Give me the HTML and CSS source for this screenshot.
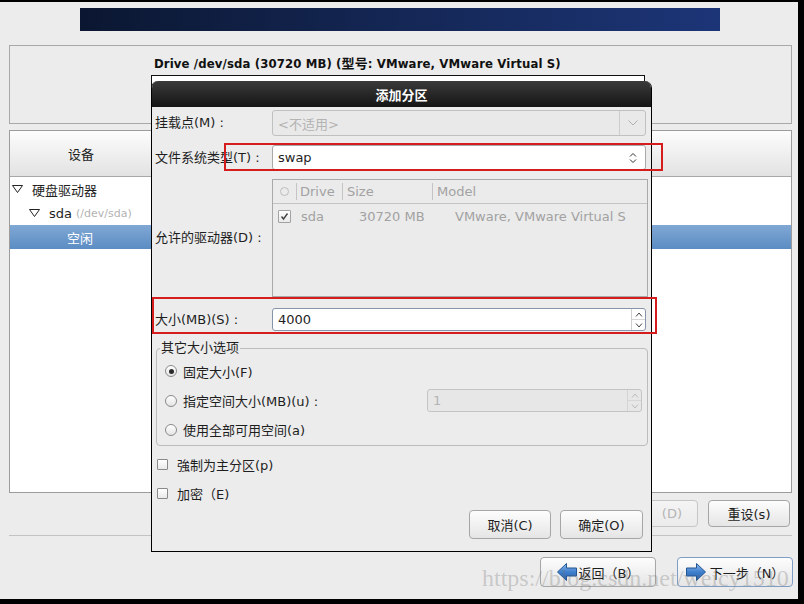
FILE: index.html
```html
<!DOCTYPE html>
<html lang="zh-CN">
<head>
<meta charset="utf-8">
<title>添加分区</title>
<link rel="stylesheet" href="styles.css">
</head>
<body>
<div class="screen">
  <div class="banner"></div>

  <section class="drive-panel">
    <div class="drive-title">Drive /dev/sda (30720 MB) (型号: VMware, VMware Virtual S)</div>
    <div class="part-bar"></div>
  </section>

  <section class="dev-panel">
    <div class="dev-head">
      <div class="head-dev">设备</div>
    </div>
    <div class="tree">
      <div class="tree-row lvl0">
        <svg class="tri" viewBox="0 0 11 8"><polygon points="0.5,0.5 10.5,0.5 5.5,7.5" fill="none" stroke="#222" stroke-width="1"/></svg>
        <span>硬盘驱动器</span>
      </div>
      <div class="tree-row lvl1">
        <svg class="tri" viewBox="0 0 11 8"><polygon points="0.5,0.5 10.5,0.5 5.5,7.5" fill="none" stroke="#222" stroke-width="1"/></svg>
        <span class="sda">sda</span><span class="dim">(/dev/sda)</span>
      </div>
      <div class="tree-row sel"><span>空闲</span></div>
    </div>
  </section>

  <div class="act-row">
    <button class="btn act">创建(C)</button>
    <button class="btn act">编辑(E)</button>
    <button class="btn act disabled"><span class="del-word">删除</span><span>(D)</span></button>
    <button class="btn act">重设(s)</button>
  </div>

  <div class="sep"></div>

  <div class="nav-row">
    <button class="btn nav">
      <svg class="arrow" viewBox="0 0 20 18"><defs><linearGradient id="ga" x1="0" y1="0" x2="0" y2="1"><stop offset="0" stop-color="#8dbbf0"/><stop offset="0.5" stop-color="#3f7fcc"/><stop offset="1" stop-color="#2a62ad"/></linearGradient></defs><polygon points="0.5,9 9.5,0.5 9.5,5 19.5,5 19.5,13 9.5,13 9.5,17.5" fill="url(#ga)" stroke="#245592" stroke-width="1"/></svg>
      <span>返回（B）</span>
    </button>
    <button class="btn nav next">
      <svg class="arrow" viewBox="0 0 20 18"><defs><linearGradient id="gb" x1="0" y1="0" x2="0" y2="1"><stop offset="0" stop-color="#8dbbf0"/><stop offset="0.5" stop-color="#3f7fcc"/><stop offset="1" stop-color="#2a62ad"/></linearGradient></defs><polygon points="19.5,9 10.5,0.5 10.5,5 0.5,5 0.5,13 10.5,13 10.5,17.5" fill="url(#gb)" stroke="#245592" stroke-width="1"/></svg>
      <span>下一步（N）</span>
    </button>
  </div>

  <div class="dialog">
    <div class="dlg-title">添加分区</div>
    <div class="dlg-body">
      <div class="form">
        <div class="lbl">挂载点(M) :</div>
        <div class="combo disabled">
          <span class="combo-text">&lt;不适用&gt;</span>
          <span class="combo-btn"><svg class="chev" viewBox="0 0 10 6"><polyline points="0.5,0.5 5,5 9.5,0.5" fill="none" stroke="#b0b0b0" stroke-width="1"/></svg></span>
        </div>

        <div class="lbl">文件系统类型(T) :</div>
        <div class="combo fs">
          <span class="combo-text">swap</span>
          <svg class="updown" viewBox="0 0 8 12"><polyline points="1,4.5 4,1.5 7,4.5" fill="none" stroke="#333" stroke-width="1"/><polyline points="1,7.5 4,10.5 7,7.5" fill="none" stroke="#333" stroke-width="1"/></svg>
        </div>

        <div class="lbl">允许的驱动器(D) :</div>
        <div class="drives">
          <div class="drv-head">
            <span class="h0"><span class="hcircle"></span></span>
            <span class="h1">Drive</span>
            <span class="h2">Size</span>
            <span class="h3">Model</span>
          </div>
          <div class="drv-row">
            <span class="r0"><span class="check small on"><svg viewBox="0 0 9 9"><polyline points="1.5,4.5 3.5,7 7.5,1.5" fill="none" stroke="#444" stroke-width="1.4"/></svg></span></span>
            <span class="r1">sda</span>
            <span class="r2">30720 MB</span>
            <span class="r3">VMware, VMware Virtual S</span>
          </div>
        </div>

        <div class="lbl size-lbl">大小(MB)(S) :</div>
        <div class="spin size">
          <span class="spin-text">4000</span>
          <span class="spin-btns">
            <span class="sb"><svg viewBox="0 0 8 5"><polyline points="1,4.5 4,1 7,4.5" fill="none" stroke="#444" stroke-width="1"/></svg></span>
            <span class="sb"><svg viewBox="0 0 8 5"><polyline points="1,0.5 4,4 7,0.5" fill="none" stroke="#444" stroke-width="1"/></svg></span>
          </span>
        </div>
      </div>

      <fieldset class="group">
        <legend>其它大小选项</legend>
        <div class="radio-row r-a"><span class="radio on"></span><span>固定大小(F)</span></div>
        <div class="radio-row r-b"><span class="radio"></span><span>指定空间大小(MB)(u) :</span>
          <div class="spin mini disabled">
            <span class="spin-text">1</span>
            <span class="spin-btns">
              <span class="sb"><svg viewBox="0 0 8 5"><polyline points="1,4.5 4,1 7,4.5" fill="none" stroke="#bbb" stroke-width="1"/></svg></span>
              <span class="sb"><svg viewBox="0 0 8 5"><polyline points="1,0.5 4,4 7,0.5" fill="none" stroke="#bbb" stroke-width="1"/></svg></span>
            </span>
          </div>
        </div>
        <div class="radio-row r-c"><span class="radio"></span><span>使用全部可用空间(a)</span></div>
      </fieldset>

      <div class="check-row c-a"><span class="check"></span><span>強制为主分区(p)</span></div>
      <div class="check-row c-b"><span class="check"></span><span>加密（E)</span></div>

      <div class="dlg-buttons">
        <button class="btn dbtn">取消(C)</button>
        <button class="btn dbtn ok">确定(O)</button>
      </div>
    </div>
  </div>

  <div class="mark mark-fs"></div>
  <div class="mark mark-size"></div>

  <div class="watermark">https://blog.csdn.net/weicy1510</div>
</div>
</body>
</html>
```

FILE: styles.css
```css
* { box-sizing: border-box; margin: 0; padding: 0; }
html, body { width: 804px; height: 604px; overflow: hidden; }
body {
  background: #000;
  font-family: "DejaVu Sans", "Noto Sans CJK SC", sans-serif;
  font-size: 13px;
  color: #1e1e1e;
}

.screen {
  position: relative;
  width: 804px;
  height: 604px;
  background: #ececec;
  border-top: 2px solid #000;
  border-right: 6px solid #000;
  border-bottom: 5px solid #000;
  display: flex;
  flex-direction: column;
}

.banner {
  flex: none;
  margin: 6px 0 0 80px;
  width: 640px;
  height: 23px;
  background: linear-gradient(90deg, #0b1731 0%, #132551 45%, #1c3577 100%);
}

/* drive panel */
.drive-panel {
  flex: none;
  margin: 14px 6px 0 9px;
  height: 79px;
  border: 1px solid #a9a9a9;
  padding-top: 10px;
}
.drive-title {
  font-weight: bold;
  line-height: 16px;
  padding-left: 144px;
  font-stretch: condensed;
  letter-spacing: 0.12px;
  white-space: nowrap;
  color: #111;
}
.part-bar {
  margin: 3px 0 0 141px;
  width: 494px;
  height: 44px;
  border: 1px solid #111;
  background: #fff;
}

/* device list */
.dev-panel {
  flex: none;
  margin: 6px 6px 0 9px;
  height: 363px;
  border: 1px solid #9c9c9c;
  background: #fff;
  display: flex;
  flex-direction: column;
}
.dev-head {
  flex: none;
  height: 46px;
  border-bottom: 1px solid #a8a8a8;
  background: linear-gradient(#fdfdfd, #e2e2e2);
  display: flex;
}
.head-dev {
  width: 142px;
  display: flex;
  align-items: center;
  justify-content: center;
}
.tree-row {
  height: 24px;
  display: flex;
  align-items: center;
  white-space: nowrap;
}
.tri { width: 11px; height: 8px; margin-right: 9px; flex: none; }
.lvl0 { padding-left: 2px; }
.lvl1 { padding-left: 19px; }
.dim { font-size: 11px; color: #b3b3b3; margin-left: 4px; }
.sel {
  background: linear-gradient(#80a8d4, #5b8cc3);
  color: #fff;
  padding-left: 57px;
}

/* buttons */
.btn {
  font: inherit;
  color: #1e1e1e;
  border: 1px solid #a6a6a6;
  border-radius: 4px;
  background: linear-gradient(#fdfdfd, #e5e5e5);
  display: flex;
  align-items: center;
  justify-content: center;
  white-space: nowrap;
}
.act-row {
  flex: none;
  margin-top: 7px;
  height: 27px;
  display: flex;
  justify-content: flex-end;
  gap: 10px;
  padding-right: 8px;
}
.act { width: 82px; height: 27px; }
.act.disabled {
  color: #b4b4b4;
  border-color: #c6c6c6;
  background: linear-gradient(#f4f4f4, #ebebeb);
  justify-content: flex-end;
  padding-right: 15px;
}
.del-word { margin-right: 12px; }

.sep {
  flex: none;
  margin: 8px 6px 0 9px;
  height: 1px;
  background: #c3c3c3;
}

.nav-row {
  flex: none;
  margin-top: 21px;
  height: 30px;
  display: flex;
  justify-content: flex-end;
  gap: 21px;
  padding-right: 5px;
}
.nav { width: 116px; height: 30px; gap: 2px; }
.nav.next { border-color: #7f9cc4; gap: 4px; }
.arrow { width: 20px; height: 18px; flex: none; }

/* dialog */
.dialog {
  position: absolute;
  left: 151px;
  top: 79px;
  width: 501px;
  height: 471px;
  border: 1px solid #000;
  border-top: none;
  border-radius: 7px 7px 0 0;
  background: #ececec;
  overflow: hidden;
}
.dlg-title {
  height: 26px;
  background: linear-gradient(#3a3a3a, #151515);
  color: #fff;
  font-weight: bold;
  display: flex;
  align-items: center;
  justify-content: center;
}
.dlg-body { padding: 3px 4px 0 3px; }

.form {
  display: grid;
  grid-template-columns: 117px 374px;
  row-gap: 9px;
}
.lbl { align-self: center; white-space: nowrap; line-height: 16px; }

.combo {
  height: 26px;
  border: 1px solid #a9a9a9;
  border-radius: 3px;
  background: #fff;
  display: flex;
  align-items: center;
}
.combo.fs { height: 25px; }
.combo-text { flex: 1; padding-left: 5px; }
.combo.disabled { background: #e9e9e9; border-color: #c0c0c0; color: #b3b3b3; }
.combo-btn {
  width: 26px;
  height: 100%;
  border-left: 1px solid #cdcdcd;
  display: flex;
  align-items: center;
  justify-content: center;
}
.chev { width: 10px; height: 6px; }
.updown { width: 8px; height: 12px; margin-right: 8px; }

.drives {
  height: 118px;
  margin-right: -2px;
  border: 1px solid #a9a9a9;
  background: #ebebeb;
  color: #a2a2a2;
}
.drv-head {
  height: 24px;
  border-bottom: 1px solid #c4c4c4;
  display: flex;
  align-items: center;
}
.drv-head > span { height: 17px; display: flex; align-items: center; }
.h0 { width: 23px; justify-content: center; }
.hcircle { width: 9px; height: 9px; border: 1px solid #bdbdbd; border-radius: 50%; }
.h1 { width: 46px; border-left: 1px solid #c4c4c4; padding-left: 3px; }
.h2 { width: 90px; border-left: 1px solid #c4c4c4; padding-left: 4px; }
.h3 { flex: 1; border-left: 1px solid #c4c4c4; padding-left: 4px; }
.drv-row { height: 24px; display: flex; align-items: center; white-space: nowrap; }
.r0 { width: 28px; padding-left: 5px; display: flex; }
.r1 { width: 58px; }
.r2 { width: 96px; }

.check {
  width: 11px;
  height: 11px;
  border: 1px solid #8a8a8a;
  border-radius: 1px;
  background: linear-gradient(#ffffff, #e9e9e9);
  flex: none;
  display: flex;
  align-items: center;
  justify-content: center;
}
.check.small { width: 13px; height: 13px; border-color: #a2a2a2; }
.check svg { width: 9px; height: 9px; }

.size-lbl { margin-top: 2px; }
.spin {
  display: flex;
  align-items: stretch;
  border: 1px solid #a9a9a9;
  border-radius: 3px;
  background: #fff;
}
.spin.size { margin-top: 2px; height: 23px; border-color: #8795aa; }
.spin-text { flex: 1; display: flex; align-items: center; padding-left: 5px; }
.spin-btns {
  width: 14px;
  border-left: 1px solid #cfcfcf;
  display: flex;
  flex-direction: column;
}
.sb { flex: 1; display: flex; align-items: center; justify-content: center; }
.sb + .sb { border-top: 1px solid #d6d6d6; }
.sb svg { width: 8px; height: 5px; }

.group {
  margin: 9px -1px 0 1px;
  border: 1px solid #bcbcbc;
  border-radius: 4px;
  padding: 0 5px 1px 3px;
  min-width: 0;
}
.group legend { line-height: 16px; padding: 0 1px; }
.radio-row { display: flex; align-items: center; padding-left: 5px; white-space: nowrap; }
.r-a { height: 30px; }
.r-b { height: 29px; }
.r-c { height: 29px; }
.radio {
  width: 12px;
  height: 12px;
  border: 1px solid #8a8a8a;
  border-radius: 50%;
  background: linear-gradient(#ffffff, #e4e4e4);
  margin-right: 6px;
  flex: none;
  display: flex;
  align-items: center;
  justify-content: center;
}
.radio.on::after {
  content: "";
  width: 5px;
  height: 5px;
  border-radius: 50%;
  background: #2a2a2a;
}
.spin.mini { margin-left: auto; width: 215px; height: 23px; }
.spin.disabled { background: #e7e7e7; border-color: #c4c4c4; color: #b4b4b4; }
.spin.disabled .spin-btns { border-left-color: #d4d4d4; }

.check-row { display: flex; align-items: center; padding-left: 2px; height: 24px; white-space: nowrap; }
.check-row .check { margin-right: 9px; }
.c-a { margin-top: 6px; }
.c-b { margin-top: 5px; }

.dlg-buttons {
  margin-top: 5px;
  display: flex;
  justify-content: flex-end;
  gap: 9px;
  padding-right: 4px;
}
.dbtn { width: 82px; height: 29px; }
.dbtn.ok { width: 83px; }

/* annotation overlays */
.mark { position: absolute; border: 2px solid #d51d1d; }
.mark-fs { left: 224px; top: 141px; width: 439px; height: 28px; }
.mark-size { left: 152px; top: 295px; width: 505px; height: 37px; }

.watermark {
  position: absolute;
  left: 482px;
  top: 564px;
  font-family: "Liberation Serif", "DejaVu Serif", serif;
  font-size: 24px;
  line-height: 24px;
  color: rgba(110, 110, 110, 0.3);
  white-space: nowrap;
  pointer-events: none;
}
```
